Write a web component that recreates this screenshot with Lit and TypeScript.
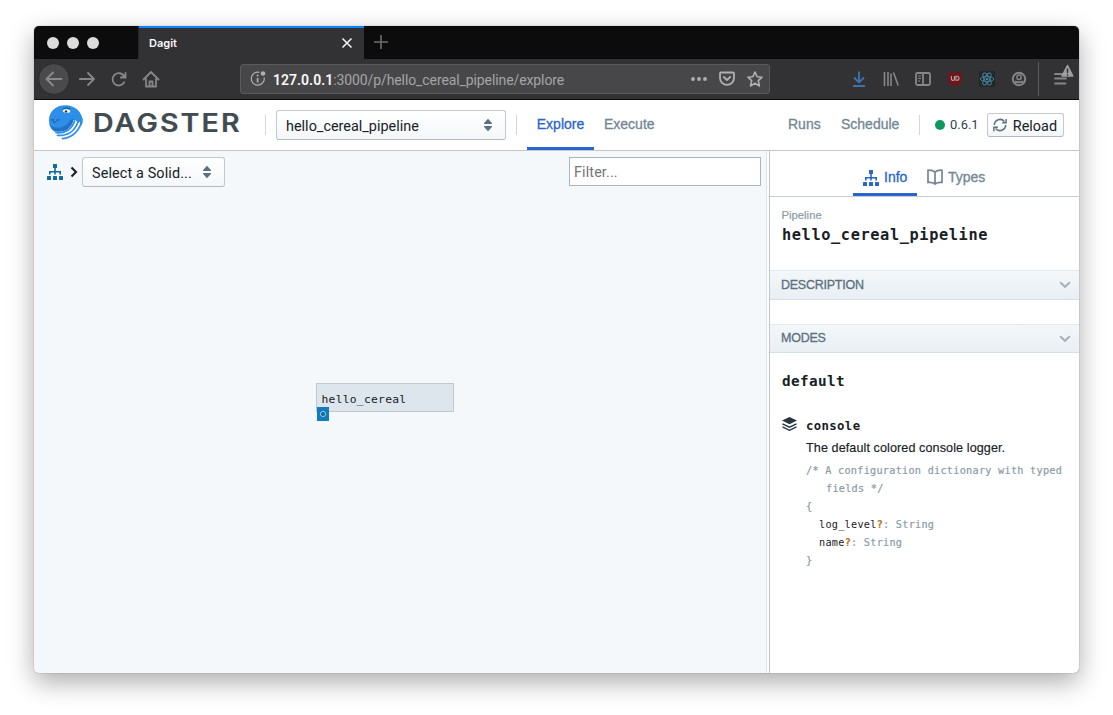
import { LitElement, html, svg, css } from "lit";
import { customElement } from "lit/decorators.js";

const hierarchy = (color: string) => html`<svg width="16" height="16" viewBox="0 0 16 16" fill=${color}>
  <rect x="6" y="0" width="4" height="4" rx=".6" /><path d="M7.200 4h1.600v3H14v3.500h-1.600V8.500H8.800v2H7.200v-2H3.600v2H2V7h5.200z" />
  <rect x="0" y="12" width="4" height="4" rx=".6" /><rect x="6" y="12" width="4" height="4" rx=".6" /><rect x="12" y="12" width="4" height="4" rx=".6" />
</svg>`;

const caret = html`<svg width="10" height="14" viewBox="0 0 10 14" fill="#5c7080">
  <path d="M5 .8l3.900 4.200q.5 1-.5 1H1.600q-1 0-.5-1zM5 13.200l3.900-4.200q.5-1-.5-1H1.600q-1 0-.5 1z" />
</svg>`;

const chevron = html`<svg width="12" height="8" viewBox="0 0 12 8" fill="none" stroke="#a3b2bf" stroke-width="2">
  <path d="M1.200 1.200L6 5.800l4.800-4.600" />
</svg>`;

const octopus = html`<svg width="36" height="36" viewBox="0 0 36 36">
  <path d="M1 17C.6 7.200 8 1.200 17.500 1.200S34.700 8 34.700 17.500C34.700 23 33 25 30 25L10 28C4.500 28 1.200 23 1 17z" fill="#2e8fe8" />
  <path d="M1.500 20.500c4 4.500 14 4.500 18.500-1.500 1.500-2 3-4.500 5.500-4 1.500 1 .5 4-1.500 7C20 27.500 12 30 7 27.500 4 25.500 2.200 23 1.500 20.500z" fill="#1f74c8" />
  <path d="M25.500 16C24 24 17 29 7.500 27.500L9 36h27V17z" fill="#fff" />
  <path d="M8 28.600c8.500.9 16-3 18.500-11.600M9.500 31.400c9.500.6 17.300-4 20.300-13.400M14.500 34.600c8.500-.8 15.500-6.500 18.800-15.600" fill="none" stroke="#2f92ee" stroke-width="1.800" stroke-linecap="round" />
  <path d="M26 15l8.500-1q.8 4-.8 7.500z" fill="#2e8fe8" />
  <path d="M28.300 17.500l-1 3M31.700 18l-1.300 3.600" stroke="#fff" stroke-width="1" />
  <ellipse cx="18.500" cy="7" rx="3.800" ry="1.700" fill="#fff" transform="rotate(8 18.500 7)" />
  <circle cx="18" cy="7.400" r="1.200" fill="#263847" />
  <path d="M14.800 5.200q3-2.300 7-.6" stroke="#174d80" stroke-width="1" fill="none" />
  <path d="M3 15.500q1.500 1.200 3 0M8.500 15.700q1.500 1 3-.3M5 17.700q1.500 1 3 0" stroke="#1d5d9c" stroke-width="1.100" fill="none" />
</svg>`;

@customElement("app-root")
export class AppRoot extends LitElement {
  static styles = css`
    :host { display: block; height: 715px; box-sizing: border-box; padding: 26px 34px 42px; background: #fff; overflow: hidden; font-family: "Liberation Sans", Arial, sans-serif; color: #182026; }
    * { box-sizing: border-box; }
    svg { display: block; flex: none; }
    span { white-space: pre; }
    .window { width: 1045px; height: 647px; display: flex; flex-direction: column; border-radius: 5px; overflow: hidden; background: #fff; box-shadow: 0 0 1px rgba(0,0,0,.6), 0 9px 26px rgba(0,0,0,.33); }
    .tabbar { height: 33px; flex: none; background: #0c0c0d; display: flex; }
    .lights { width: 105px; display: flex; gap: 8px; padding: 11px 0 0 13px; border-right: 1px solid #28282a; }
    .light { width: 12px; height: 12px; border-radius: 50%; background: #dcdcdc; }
    .tab { width: 225px; display: flex; align-items: center; justify-content: space-between; background: #323234; border-top: 2px solid #0a84ff; padding: 0 11px 0 10px; color: #f9f9fa; font: 600 11px/31px Inter, sans-serif; }
    .tab svg { margin-top: -1px; }
    .plus { margin: 9px 0 0 10px; }
    .toolbar { height: 41px; flex: none; background: #323234; border-bottom: 1px solid #0c0c0d; display: flex; align-items: center; padding-left: 4px; }
    .back { width: 32px; height: 32px; border-radius: 50%; background: #4a4a4c; border: 1px solid #29292b; display: grid; place-items: center; }
    .forward { margin-left: 9px; }
    .refresh { margin-left: 16px; }
    .home { margin-left: 15px; }
    .url { width: 530px; height: 30px; margin-left: 80px; border: 1px solid #5a5a5c; border-radius: 3px; background: #474749; display: flex; align-items: center; padding: 0 6px 0 9px; color: #a4a4a6; font: 14px/28px Roboto, sans-serif; letter-spacing: -.1px; }
    .url b { color: #f9f9fa; font-weight: 600; letter-spacing: .03px; }
    .addr { margin-left: 7px; flex: 1; padding-top: 1px; }
    .url svg + svg { margin-left: 12px; }
    .tools { margin-left: 81px; display: flex; gap: 16px; align-items: center; }
    .menu { margin-left: 11px; padding-left: 13px; height: 34px; border-left: 1px solid #5b5b5d; display: flex; }
    .header { height: 51px; flex: none; border-bottom: 1px solid #c3c7ca; display: flex; align-items: flex-start; padding-left: 14px; }
    .logo { display: flex; padding-top: 4px; width: 217px; }
    .word { margin: 3px 0 0 9px; font: 600 25.500px/32px Inter, sans-serif; letter-spacing: 1.900px; color: #424b50; transform: scaleX(1.12); transform-origin: 0 0; -webkit-text-stroke: .2px currentColor; }
    .rule { width: 1px; height: 20px; margin-top: 15px; background: #d4d8db; flex: none; }
    .select { height: 30px; border: 1px solid #c4c9cd; border-bottom-color: #b3b9be; border-radius: 3px; background: linear-gradient(#fff, #f4f7f9); display: flex; align-items: center; justify-content: space-between; font: 14.400px/28px Roboto, sans-serif; color: #182026; padding: 0 12px 0 9px; }
    .select span { padding-top: 3px; }
    .pipe { width: 230px; margin: 10px 10px 0; }
    .pipe span { letter-spacing: .02px; }
    .nav { font-size: 14px; line-height: 49px; height: 50px; color: #738694; -webkit-text-stroke: .3px currentColor; }
    .active { color: #2965cc; border-bottom: 3px solid #2965cc; }
    .explore { margin-left: 10px; width: 67px; text-align: center; }
    .execute { margin-left: 10px; width: 184px; }
    .runs { width: 53px; }
    .sched { width: 78px; }
    .dot { width: 10px; height: 10px; border-radius: 50%; background: #0f9960; margin: 20px 5px 0 15px; flex: none; }
    .version { font: 12.900px/50px Roboto, sans-serif; width: 37px; color: #30404d; }
    .reload { width: 77px; height: 24px; margin-top: 13px; padding: 0 6px 0 5px; line-height: 22px; }
    .reload svg { margin-top: -1px; }
    .main { flex: 1; display: flex; min-height: 0; }
    .canvas { width: 733px; background: #f4f8fb; border-right: 1px solid #d9e2e8; position: relative; }
    .crumbs { display: flex; align-items: center; padding: 6px 5px 0 13px; }
    .crumbs .arrow { margin: 0 4px 0 7px; }
    .solid { width: 143px; }
    .solid span { letter-spacing: .13px; }
    .filter { margin: 0 0 1px auto; width: 192px; height: 29px; border: 1px solid #a7b6c2; background: #fff; color: #757575; font: 14.300px/28px Roboto, sans-serif; letter-spacing: .15px; padding-left: 4px; }
    .node { position: absolute; left: 282px; top: 232px; width: 138px; height: 29px; background: #dde6ed; border: 1px solid #c1c9cf; padding-left: 4.500px; font: 11.300px/31px "DejaVu Sans Mono", monospace; letter-spacing: .27px; }
    .port { position: absolute; left: 283px; top: 256px; width: 12px; height: 14px; background: #137cbd; display: grid; place-items: center; }
    .split { width: 2px; background: #fff; }
    .side { flex: 1; min-width: 0; border-left: 1px solid #c0c6cb; }
    .tabs { display: flex; height: 46px; border-bottom: 1px solid #c9ced1; padding: 7px 0 0 83px; }
    .stab { display: flex; align-items: center; height: 38px; font-size: 14px; color: #738694; -webkit-text-stroke: .3px currentColor; gap: 5px; padding: 0 10px; }
    .stab.active { color: #2965cc; padding-top: 3px; width: 64px; }
    .stab.active svg { margin-top: 2px; }
    .kind { font-size: 11.300px; line-height: 14px; color: #8a9ba8; padding: 11px 0 0 11.500px; -webkit-text-stroke: .2px currentColor; }
    .mono { font-family: "DejaVu Sans Mono", monospace; font-weight: 700; }
    .title { font-size: 15.300px; letter-spacing: .6px; line-height: 24px; padding: 1px 0 0 12px; height: 48px; }
    .section { height: 30px; border-top: 1px solid #e2e9ee; border-bottom: 1px solid #d6e0e7; background: linear-gradient(#f3f7fa, #e9eff3); display: flex; align-items: center; justify-content: space-between; padding: 0 8px 1px 11px; font-size: 12.500px; color: #5c7080; -webkit-text-stroke: .3px currentColor; letter-spacing: -.25px; }
    .section svg { margin-top: 1px; }
    .modes { margin-top: 24px; height: 29px; }
    .mode { font-size: 14.300px; letter-spacing: .4px; line-height: 20px; padding: 18px 0 0 12px; }
    .logger { display: flex; padding: 26px 0 0 12px; }
    .body { margin-left: 9px; }
    .name { font-size: 12.300px; letter-spacing: .37px; line-height: 18px; }
    .desc { font-size: 12.600px; letter-spacing: .09px; line-height: 16px; margin: 5px 0; -webkit-text-stroke: .15px currentColor; white-space: nowrap; }
    .code { font: 10.200px/18px "DejaVu Sans Mono", monospace; letter-spacing: .27px; color: #8a9ba8; -webkit-text-stroke: .2px currentColor; white-space: nowrap; padding-top: 1px; }
    .wrap { padding-left: 20px; }
    .field { padding-left: 13px; }
    .field i { font-style: normal; color: #182026; -webkit-text-stroke: 0; }
    .field b { color: #bf7326; }
  `;

  render() {
    return html`<div class="window">
      <div class="tabbar">
        <div class="lights"><div class="light"></div><div class="light"></div><div class="light"></div></div>
        <div class="tab"><span>Dagit</span>
          <svg width="12" height="12" viewBox="0 0 12 12" stroke="#f0f0f0" stroke-width="1.600"><path d="M1.500 1.500l9 9M10.500 1.500l-9 9" /></svg></div>
        <svg class="plus" width="14" height="14" viewBox="0 0 14 14" stroke="#6e6e70" stroke-width="1.600"><path d="M7 0v14M0 7h14" /></svg>
      </div>
      <div class="toolbar">
        <div class="back"><svg width="18" height="16" viewBox="0 0 18 16" fill="none" stroke="#8a8a8c" stroke-width="1.800" stroke-linecap="round" stroke-linejoin="round"><path d="M16.500 8H1.500M8 1.500L1.500 8 8 14.500" /></svg></div>
        <svg class="forward" width="16" height="16" viewBox="0 0 16 16" fill="none" stroke="#868688" stroke-width="1.800" stroke-linecap="round" stroke-linejoin="round"><path d="M.8 8H15M9 2l6 6-6 6" /></svg>
        <svg class="refresh" width="16" height="16" viewBox="0 0 16 16" fill="none" stroke="#868688" stroke-width="1.800" stroke-linecap="round"><path d="M13.300 5.500A6.200 6.200 0 1 0 13.200 11.300M14.500 1.800v4.700H9.800" /><path d="M15 2v5h-5z" fill="#868688" stroke="none" /></svg>
        <svg class="home" width="18" height="17" viewBox="0 0 18 17" fill="none" stroke="#868688" stroke-width="1.800" stroke-linejoin="round" stroke-linecap="round"><path d="M1.500 8.500L9 1l7.500 7.500M4 8v7.500h10V8" /><path d="M7.500 15v-4.500h3V15" /></svg>
        <div class="url">
          <svg width="16" height="16" viewBox="0 0 16 16" fill="none" stroke="#b0b0b2" stroke-width="1.200"><path d="M9.300 1.300A6.500 6.500 0 1 0 14.200 6.500" /><path d="M7.600 7v4.500" stroke-width="1.700" /><circle cx="7.600" cy="4.600" r="1" fill="#b0b0b2" stroke="none" /><circle cx="13" cy="2.500" r="2.300" fill="#b0b0b2" stroke="none" /></svg>
          <span class="addr"><b>127.0.0.1</b>:3000/p/hello_cereal_pipeline/explore</span>
          <svg width="16" height="16" viewBox="0 0 16 16" fill="#b0b0b2"><circle cx="2" cy="8" r="1.900" /><circle cx="8" cy="8" r="1.900" /><circle cx="14" cy="8" r="1.900" /></svg>
          <svg width="16" height="16" viewBox="0 0 16 16" fill="none" stroke="#b0b0b2" stroke-width="1.800" stroke-linecap="round" stroke-linejoin="round"><path d="M2 1.500h12q1 0 1 1v4.500a7 6.800 0 0 1-14 0V2.500q0-1 1-1z" /><path d="M4.800 6L8 9l3.200-3" /></svg>
          <svg width="16" height="16" viewBox="0 0 16 16" fill="none" stroke="#b0b0b2" stroke-width="1.600" stroke-linejoin="round"><path d="M8 1l2.100 4.700 5 .5-3.800 3.500 1.100 5.300L8 12.200 3.600 15l1.100-5.300L.9 6.200l5-.5z" /></svg>
        </div>
        <div class="tools">
          <svg width="16" height="16" viewBox="0 0 16 16" fill="none" stroke="#3f72ab" stroke-width="1.900"><path d="M8 .5v11M3 6.500l5 5 5-5" /><path d="M2 15h12" /></svg>
          <svg width="16" height="16" viewBox="0 0 16 16" stroke="#868688" stroke-width="1.600"><path d="M1.500 1v14M5 1v14M8 2.500V15M10.500 1.500l4.700 13" /></svg>
          <svg width="16" height="16" viewBox="0 0 16 16" fill="none" stroke="#868688" stroke-width="1.800"><rect x="1" y="2" width="14" height="12" rx="1.500" /><path d="M8 2v12" /><path d="M3 5h3M3 7.500h3M3 10h2" stroke-width="1" /></svg>
          <svg width="16" height="16" viewBox="0 0 16 16"><path d="M8 .2q3 2 7 2.200v5.800q0 5-7 7.600Q1 13.200 1 8.200V2.400Q5 2.200 8 .2z" fill="#721518" /><path d="M4.400 5v2.900q0 1.500 1.500 1.500t1.500-1.500V5" fill="none" stroke="#aaa" stroke-width="1.100" /><path d="M8.900 5.300h1.200q1.900 0 1.900 2t-1.900 2H8.900z" fill="none" stroke="#aaa" stroke-width="1.100" /></svg>
          <svg width="16" height="16" viewBox="0 0 16 16" fill="none" stroke="#428aa0" stroke-width=".9"><rect width="16" height="16" fill="#262628" stroke="none" />${[0, 60, 120].map(a => svg`<ellipse cx="8" cy="8" rx="6.700" ry="2.600" transform=${`rotate(${a} 8 8)`} />`)}<circle cx="8" cy="8" r="1.300" fill="#428aa0" stroke="none" /></svg>
          <svg width="16" height="16" viewBox="0 0 16 16" fill="none" stroke="#868688" stroke-width="2"><circle cx="8" cy="8" r="6.200" /><circle cx="8" cy="6.300" r="2.200" stroke-width="1.500" /><path d="M3.800 10.300q4.200 2 8.400 0" /></svg>
        </div>
        <div class="menu"><svg width="24" height="24" viewBox="0 0 24 24" stroke="#868688" stroke-width="1.800" stroke-linecap="round"><path d="M3 12h10M3 16.500h11M3 21.500h10.500" /><path d="M15.500 3.500l5.300 10.500H10z" fill="#a0a0a2" stroke="#a0a0a2" stroke-width="1.500" stroke-linejoin="round" /><path d="M15.500 7v3.500M15.500 12.800v.2" stroke="#323234" stroke-width="1.500" /></svg></div>
      </div>
      <div class="header">
        <div class="logo">${octopus}<span class="word">DAGSTER</span></div>
        <div class="rule"></div>
        <div class="select pipe"><span>hello_cereal_pipeline</span>${caret}</div>
        <div class="rule"></div>
        <div class="nav explore active">Explore</div>
        <div class="nav execute">Execute</div>
        <div class="nav runs">Runs</div>
        <div class="nav sched">Schedule</div>
        <div class="rule"></div>
        <div class="dot"></div><span class="version">0.6.1</span>
        <div class="select reload"><svg width="14" height="14" viewBox="0 0 16 16" fill="none" stroke="#5c7080" stroke-width="1.700"><path d="M1.500 8A6.500 6.500 0 0 1 13 4M15 1v4.500h-4.500M14.500 8A6.500 6.500 0 0 1 3 12M1 15v-4.500h4.500" /></svg><span>Reload</span></div>
      </div>
      <div class="main">
        <div class="canvas">
          <div class="crumbs">${hierarchy("#106ba3")}
            <svg class="arrow" width="8" height="12" viewBox="0 0 8 12" fill="none" stroke="#182026" stroke-width="2.100"><path d="M1.500 1.500L6 6l-4.500 4.500" /></svg>
            <div class="select solid"><span>Select a Solid...</span>${caret}</div>
            <div class="filter">Filter...</div>
          </div>
          <div class="node">hello_cereal</div>
          <div class="port"><svg width="8" height="8" viewBox="0 0 8 8"><circle cx="4" cy="4" r="2.600" fill="#106ba3" stroke="#9cc5df" stroke-width="1" /></svg></div>
        </div>
        <div class="split"></div>
        <div class="side">
          <div class="tabs">
            <div class="stab active">${hierarchy("#2965cc")}<span>Info</span></div>
            <div class="stab"><svg width="16" height="16" viewBox="0 0 16 16" fill="none" stroke="#738694" stroke-width="1.700"><path d="M8 3Q5 .8 1 1.300v12.200q4-.5 7 1.500 3-2 7-1.500V1.300Q11 .8 8 3zv12" /></svg><span>Types</span></div>
          </div>
          <div class="kind">Pipeline</div>
          <div class="mono title">hello_cereal_pipeline</div>
          <div class="section"><span>DESCRIPTION</span>${chevron}</div>
          <div class="section modes"><span>MODES</span>${chevron}</div>
          <div class="mono mode">default</div>
          <div class="logger">
            <svg width="15" height="14" viewBox="0 0 15 14" fill="#293742"><path d="M7.500 0L15 3.500 7.500 7.200 0 3.500z" /><path d="M.5 6.800l7 3.400 7-3.400M.5 9.900l7 3.400 7-3.400" fill="none" stroke="#293742" stroke-width="1.400" /></svg>
            <div class="body">
              <div class="mono name">console</div>
              <div class="desc">The default colored console logger.</div>
              <div class="code">
                <div>/* A configuration dictionary with typed</div>
                <div class="wrap">fields */</div>
                <div>{</div>
                <div class="field"><i>log_level</i><b>?</b>: String</div>
                <div class="field"><i>name</i><b>?</b>: String</div>
                <div>}</div>
              </div>
            </div>
          </div>
        </div>
      </div>
    </div>`;
  }
}
